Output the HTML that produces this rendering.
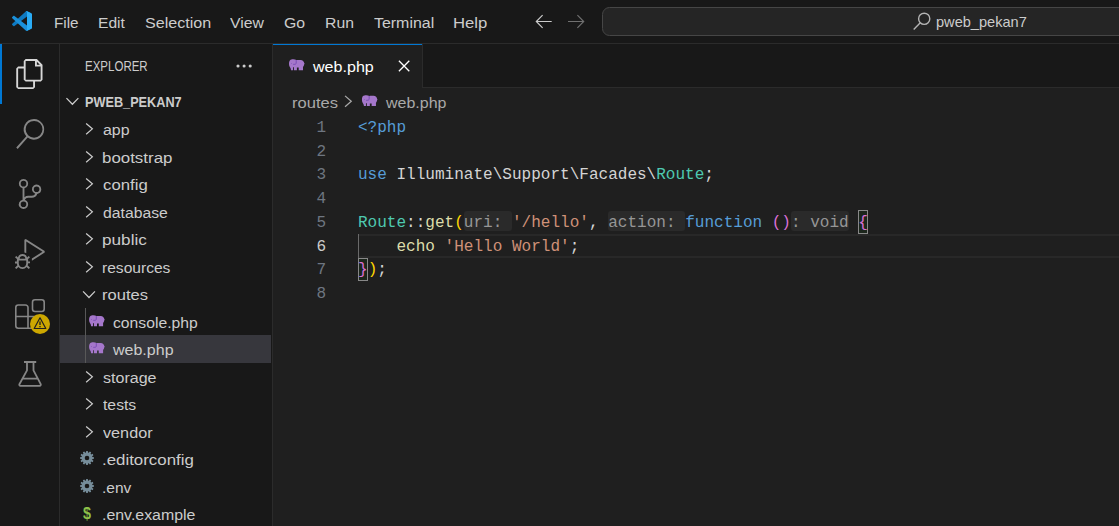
<!DOCTYPE html>
<html lang="en">
<head>
<meta charset="utf-8">
<title>web.php - pweb_pekan7 - Visual Studio Code</title>
<style>
*{box-sizing:border-box;margin:0;padding:0}
html,body{width:1119px;height:526px;overflow:hidden;background:#1f1f1f}
body{position:relative;font-family:"Liberation Sans",sans-serif;color:#cccccc}
.abs{position:absolute}
#titlebar{left:0;top:0;width:1119px;height:44px;background:#181818;border-bottom:1px solid #2b2b2b}
#activity{left:0;top:44px;width:60px;height:482px;background:#181818;border-right:1px solid #2b2b2b}
#sidebar{left:60px;top:44px;width:213px;height:482px;background:#181818;border-right:1px solid #2b2b2b}
#tabs{left:273px;top:44px;width:846px;height:44px;background:#181818;border-bottom:1px solid #2b2b2b}
#tab{left:273px;top:44px;width:149px;height:44px;background:#1f1f1f;border-top:1px solid #0078d4}
#tabr{left:422px;top:44px;width:1px;height:44px;background:#2b2b2b}
.t{white-space:nowrap;line-height:1;transform-origin:0 50%}
.code{font-family:"Liberation Mono",monospace;font-size:16.040px;white-space:pre;line-height:23.750px;height:23.750px;left:358px;color:#d4d4d4}
.ln{font-family:"Liberation Mono",monospace;font-size:16.040px;line-height:23.750px;height:23.750px;left:286px;width:40px;text-align:right}
.hint{color:#969696}
svg{display:block;overflow:visible}
</style>
</head>
<body>

<!-- TITLE BAR -->
<div id="titlebar" class="abs"></div>
<svg class="abs" style="left:12px;top:10.600px" width="20" height="20" viewBox="0 0 100 100">
  <path d="M96.461 10.796 75.857.876C73.472-.273 70.622.212 68.750 2.083L1.299 63.583c-1.815 1.654-1.813 4.511.004 6.162l5.510 5.009c1.485 1.350 3.722 1.450 5.321.237L93.361 13.370C96.086 11.303 100 13.246 100 16.667v-.240c0-2.401-1.375-4.590-3.539-5.631z" fill="#0e7ac2"/>
  <path d="M96.461 89.204 75.857 99.125c-2.385 1.148-5.235.663-7.107-1.208L1.299 36.417c-1.815-1.654-1.813-4.511.004-6.162l5.510-5.009c1.485-1.350 3.722-1.450 5.321-.237L93.361 86.630C96.086 88.697 100 86.754 100 83.333v.240c0 2.401-1.375 4.590-3.539 5.631z" fill="#1a90da"/>
  <path d="M75.858 99.126c-2.386 1.148-5.236.663-7.108-1.209C71.056 100.223 75 98.590 75 95.328V4.672c0-3.262-3.944-4.895-6.250-2.589C70.622.211 73.472-.274 75.858.874l20.601 9.907C98.623 11.822 100 14.011 100 16.413v67.174c0 2.402-1.377 4.592-3.541 5.633L75.858 99.126z" fill="#2aacf5"/>
</svg>

<!-- nav arrows -->



<!-- command center -->
<div class="abs" style="left:602px;top:7px;width:560px;height:29px;background:#252525;border:1px solid #464646;border-radius:7.500px"></div>
<svg class="abs" style="left:913px;top:12px" width="18" height="18" viewBox="0 0 18 18" fill="none" stroke="#b4b4b4" stroke-width="1.400"><circle cx="11.200" cy="6.800" r="5.600"/><path d="M7.300 10.700.7 17.500"/></svg>

<!-- ACTIVITY BAR -->
<div id="activity" class="abs"></div>
<div class="abs" style="left:0;top:44px;width:2px;height:60px;background:#0078d4"></div>
<svg class="abs" style="left:15px;top:59px" width="30" height="30" viewBox="0 0 24 24" fill="#d7d7d7"><path d="M17.500 0h-9L7 1.500V6H2.500L1 7.500v15.070L2.500 24h12.070L16 22.570V18h4.700l1.300-1.430V4.500L17.500 0zm0 2.120 2.380 2.380H17.500V2.120zm-3 20.380h-12v-15H7v9.070L8.500 18h6v4.500zm6-6h-12v-15H16V6h4.500v10.500z"/></svg>
<svg class="abs" style="left:15px;top:119px" width="30" height="30" viewBox="0 0 24 24" fill="#868686"><path d="M15.250 0a8.250 8.250 0 0 0-6.180 13.720L1 22.880l1.120 1.120 8.050-9.120A8.251 8.251 0 1 0 15.250.010V0zm0 15a6.750 6.750 0 1 1 0-13.500 6.750 6.750 0 0 1 0 13.500z"/></svg>
<svg class="abs" style="left:15px;top:179px" width="30" height="30" viewBox="0 0 24 24" fill="#868686"><path d="M21.007 8.222A3.738 3.738 0 0 0 15.045 5.200a3.737 3.737 0 0 0 1.156 6.583 2.988 2.988 0 0 1-2.668 1.670h-2.990a4.456 4.456 0 0 0-2.989 1.165V7.400a3.737 3.737 0 1 0-1.494 0v9.117a3.776 3.776 0 1 0 1.816.099 2.990 2.990 0 0 1 2.668-1.667h2.990a4.484 4.484 0 0 0 4.223-3.039 3.736 3.736 0 0 0 3.250-3.687zM4.565 3.738a2.242 2.242 0 1 1 4.484 0 2.242 2.242 0 0 1-4.484 0zm4.484 16.441a2.242 2.242 0 1 1-4.484 0 2.242 2.242 0 0 1 4.484 0zm8.221-9.715a2.242 2.242 0 1 1 0-4.485 2.242 2.242 0 0 1 0 4.485z"/></svg>
<svg class="abs" style="left:15px;top:239px" width="30" height="30" viewBox="0 0 24 24" fill="#868686"><path d="M10.940 13.500l-1.320 1.320a3.730 3.730 0 0 0-7.240 0L1.060 13.500 0 14.560l1.720 1.720-.22.220V18H0v1.500h1.500v.080c.077.489.214.966.410 1.420L0 22.940 1.060 24l1.650-1.650A4.308 4.308 0 0 0 6 24a4.310 4.310 0 0 0 3.290-1.650L10.940 24 12 22.940 10.090 21c.198-.464.336-.951.410-1.450v-.1H12V18h-1.500v-1.500l-.22-.22L12 14.560l-1.060-1.060zM6 13.500a2.250 2.250 0 0 1 2.250 2.250h-4.500A2.250 2.250 0 0 1 6 13.500zm3 6a3.330 3.330 0 0 1-3 3 3.330 3.330 0 0 1-3-3v-2.250h6v2.250zm14.760-9.900v1.260L13.500 17.370V15.600l8.500-5.370L9 2v9.460a5.070 5.070 0 0 0-1.500-.72V.630L8.640 0l15.120 9.600z"/></svg>
<svg class="abs" style="left:15px;top:299px" width="30" height="30" viewBox="0 0 30 30" fill="none" stroke="#868686" stroke-width="1.600"><rect x="17.500" y=".8" width="11.700" height="11.700" rx="2.500"/><path d="M13 17.500V8.500a2.500 2.500 0 0 0-2.500-2.500H3.300A2.500 2.500 0 0 0 .8 8.500v18.200a2.500 2.500 0 0 0 2.500 2.500h20a2.500 2.500 0 0 0 2.500-2.500V20a2.500 2.500 0 0 0-2.500-2.500H.8M13 17.500v11.700"/></svg>
<svg class="abs" style="left:30px;top:314px" width="20" height="20" viewBox="0 0 20 20"><circle cx="10" cy="10" r="10" fill="#cca700"/><path d="M10 3.800 15.800 14.500H4.200z" fill="none" stroke="#1f1f1f" stroke-width="1.200" stroke-linejoin="round"/><path d="M10 7.500v3.500M10 12v1.300" stroke="#1f1f1f" stroke-width="1.300"/></svg>
<svg class="abs" style="left:15px;top:359px" width="30" height="30" viewBox="0 0 30 30" fill="none" stroke="#868686" stroke-width="1.800" stroke-linejoin="round"><path d="M9 3h12.200M12 3v8.400L4.400 25.200a1.100 1.100 0 0 0 1 1.600h19.300a1.100 1.100 0 0 0 1-1.600L18.500 11.400V3M8 19.700h14.400"/></svg>

<!-- SIDEBAR -->
<div id="sidebar" class="abs"></div>
<svg class="abs" style="left:235px;top:64px" width="18" height="4" viewBox="0 0 18 4" fill="#cccccc"><circle cx="3" cy="2" r="1.550"/><circle cx="9.100" cy="2" r="1.550"/><circle cx="15.200" cy="2" r="1.550"/></svg>

<svg class="abs" style="left:84px;top:121px" width="11" height="15" viewBox="84 121 11 15"><path d="M86.15 123.45 92.35 128.85 86.15 134.25" fill="none" stroke="#cccccc" stroke-width="1.250"/></svg>
<svg class="abs" style="left:84px;top:149px" width="11" height="15" viewBox="84 149 11 15"><path d="M86.15 151.45 92.35 156.85 86.15 162.25" fill="none" stroke="#cccccc" stroke-width="1.250"/></svg>
<svg class="abs" style="left:84px;top:176px" width="11" height="15" viewBox="84 176 11 15"><path d="M86.15 178.45 92.35 183.85 86.15 189.25" fill="none" stroke="#cccccc" stroke-width="1.250"/></svg>
<svg class="abs" style="left:84px;top:204px" width="11" height="15" viewBox="84 204 11 15"><path d="M86.15 206.45 92.35 211.85 86.15 217.25" fill="none" stroke="#cccccc" stroke-width="1.250"/></svg>
<svg class="abs" style="left:84px;top:231px" width="11" height="15" viewBox="84 231 11 15"><path d="M86.15 233.45 92.35 238.85 86.15 244.25" fill="none" stroke="#cccccc" stroke-width="1.250"/></svg>
<svg class="abs" style="left:84px;top:259px" width="11" height="15" viewBox="84 259 11 15"><path d="M86.15 261.45 92.35 266.85 86.15 272.25" fill="none" stroke="#cccccc" stroke-width="1.250"/></svg>
<svg class="abs" style="left:81px;top:289px" width="16" height="11" viewBox="81 289 16 11"><path d="M83.05 291.40 89.00 297.50 94.95 291.40" fill="none" stroke="#cccccc" stroke-width="1.250"/></svg>
<svg class="abs" style="left:88px;top:314px" width="18" height="13" viewBox="88 314 18 13"><g transform="translate(89.10 315.25) scale(1.0000 1.0000)"><path d="M1 .9C1.800.2 3 0 4.200 0c1.400 0 2.400.3 3.100.8.600-.1 1.300-.15 2-.15h2.300c2.100.1 3.400 1.350 3.600 3.150l.4.400-.4.700c-.1 1.100-.6 2.100-1.200 2.700v3.300H9.700V8.300H7.900v2.600h-3V8H4v2.900H2C1.900 9.800 1.600 8.800 1 8 .4 7.200 0 6 0 4.500 0 3 .3 1.700 1 .9z" fill="#a577cb"/><path d="M7.200.8V4c-.1.800-.9 1.100-2 1.100h-1" fill="none" stroke="#6f42b0" stroke-width=".8"/><circle cx="2.400" cy="4.200" r=".42" fill="#6b44aa"/></g></svg>
<div class="abs" style="left:60px;top:335px;width:211px;height:28px;background:#37373d"></div>
<svg class="abs" style="left:88px;top:341px" width="18" height="13" viewBox="88 341 18 13"><g transform="translate(89.10 342.25) scale(1.0000 1.0000)"><path d="M1 .9C1.800.2 3 0 4.200 0c1.400 0 2.400.3 3.100.8.600-.1 1.300-.15 2-.15h2.300c2.100.1 3.400 1.350 3.600 3.150l.4.400-.4.700c-.1 1.100-.6 2.100-1.200 2.700v3.300H9.700V8.300H7.900v2.600h-3V8H4v2.900H2C1.900 9.800 1.600 8.800 1 8 .4 7.200 0 6 0 4.500 0 3 .3 1.700 1 .9z" fill="#a577cb"/><path d="M7.200.8V4c-.1.800-.9 1.100-2 1.100h-1" fill="none" stroke="#6f42b0" stroke-width=".8"/><circle cx="2.400" cy="4.200" r=".42" fill="#6b44aa"/></g></svg>
<svg class="abs" style="left:84px;top:369px" width="11" height="15" viewBox="84 369 11 15"><path d="M86.15 371.45 92.35 376.85 86.15 382.25" fill="none" stroke="#cccccc" stroke-width="1.250"/></svg>
<svg class="abs" style="left:84px;top:396px" width="11" height="15" viewBox="84 396 11 15"><path d="M86.15 398.45 92.35 403.85 86.15 409.25" fill="none" stroke="#cccccc" stroke-width="1.250"/></svg>
<svg class="abs" style="left:84px;top:424px" width="11" height="15" viewBox="84 424 11 15"><path d="M86.15 426.45 92.35 431.85 86.15 437.25" fill="none" stroke="#cccccc" stroke-width="1.250"/></svg>
<svg class="abs" style="left:78px;top:449px" width="17" height="17" viewBox="78 449 17 17"><g transform="translate(79.80 450.80) scale(0.9600)"><path fill-rule="evenodd" d="M6.43 1.90 6.66 0.25 8.34 0.25 8.57 1.90 9.37 2.12 10.40 0.80 11.85 1.64 11.22 3.19 11.81 3.78 13.36 3.15 14.20 4.60 12.88 5.63 13.10 6.43 14.75 6.66 14.75 8.34 13.10 8.57 12.88 9.37 14.20 10.40 13.36 11.85 11.81 11.22 11.22 11.81 11.85 13.36 10.40 14.20 9.37 12.88 8.57 13.10 8.34 14.75 6.66 14.75 6.43 13.10 5.63 12.88 4.60 14.20 3.15 13.36 3.78 11.81 3.19 11.22 1.64 11.85 0.80 10.40 2.12 9.37 1.90 8.57 0.25 8.34 0.25 6.66 1.90 6.43 2.12 5.63 0.80 4.60 1.64 3.15 3.19 3.78 3.78 3.19 3.15 1.64 4.60 0.80 5.63 2.12zM5.10 7.5a2.4 2.4 0 1 0 4.80 0a2.4 2.4 0 1 0 -4.80 0z" fill="#768d9a"/></g></svg>
<svg class="abs" style="left:78px;top:477px" width="17" height="17" viewBox="78 477 17 17"><g transform="translate(79.80 478.80) scale(0.9600)"><path fill-rule="evenodd" d="M6.43 1.90 6.66 0.25 8.34 0.25 8.57 1.90 9.37 2.12 10.40 0.80 11.85 1.64 11.22 3.19 11.81 3.78 13.36 3.15 14.20 4.60 12.88 5.63 13.10 6.43 14.75 6.66 14.75 8.34 13.10 8.57 12.88 9.37 14.20 10.40 13.36 11.85 11.81 11.22 11.22 11.81 11.85 13.36 10.40 14.20 9.37 12.88 8.57 13.10 8.34 14.75 6.66 14.75 6.43 13.10 5.63 12.88 4.60 14.20 3.15 13.36 3.78 11.81 3.19 11.22 1.64 11.85 0.80 10.40 2.12 9.37 1.90 8.57 0.25 8.34 0.25 6.66 1.90 6.43 2.12 5.63 0.80 4.60 1.64 3.15 3.19 3.78 3.78 3.19 3.15 1.64 4.60 0.80 5.63 2.12zM5.10 7.5a2.4 2.4 0 1 0 4.80 0a2.4 2.4 0 1 0 -4.80 0z" fill="#768d9a"/></g></svg>
<div class="abs t" style="left:83px;top:505.40px;font-size:16.500px;font-weight:bold;color:#8dc149;transform:scaleX(.87)">$</div>
<div class="abs" style="left:85px;top:308px;width:1px;height:55px;background:#585858"></div>

<!-- EDITOR -->
<div id="tabs" class="abs"></div>
<div id="tab" class="abs"></div>
<div id="tabr" class="abs"></div>
<svg class="abs" style="left:288px;top:58px" width="18" height="13" viewBox="288 58 18 13"><g transform="translate(289.00 59.25) scale(1.0000 1.0000)"><path d="M1 .9C1.800.2 3 0 4.200 0c1.400 0 2.400.3 3.100.8.600-.1 1.300-.15 2-.15h2.300c2.100.1 3.400 1.350 3.600 3.150l.4.400-.4.700c-.1 1.100-.6 2.100-1.200 2.700v3.300H9.700V8.300H7.900v2.600h-3V8H4v2.900H2C1.900 9.800 1.600 8.800 1 8 .4 7.200 0 6 0 4.500 0 3 .3 1.700 1 .9z" fill="#a577cb"/><path d="M7.200.8V4c-.1.800-.9 1.100-2 1.100h-1" fill="none" stroke="#6f42b0" stroke-width=".8"/><circle cx="2.400" cy="4.200" r=".42" fill="#6b44aa"/></g></svg>


<svg class="abs" style="left:360px;top:94px" width="18" height="13" viewBox="360 94 18 13"><g transform="translate(361.95 95.20) scale(1.0000 1.0000)"><path d="M1 .9C1.800.2 3 0 4.200 0c1.400 0 2.400.3 3.100.8.600-.1 1.300-.15 2-.15h2.300c2.100.1 3.400 1.350 3.600 3.150l.4.400-.4.700c-.1 1.100-.6 2.100-1.200 2.700v3.300H9.700V8.300H7.900v2.600h-3V8H4v2.900H2C1.900 9.800 1.600 8.800 1 8 .4 7.200 0 6 0 4.500 0 3 .3 1.700 1 .9z" fill="#a577cb"/><path d="M7.200.8V4c-.1.800-.9 1.100-2 1.100h-1" fill="none" stroke="#6f42b0" stroke-width=".8"/><circle cx="2.400" cy="4.200" r=".42" fill="#6b44aa"/></g></svg>
<svg class="abs" style="left:534px;top:13px" width="20" height="18" viewBox="534 13 20 18"><path d="M542.600 15.200 536.300 21.500 542.600 27.800M536.300 21.500H551.700" fill="none" stroke="#cccccc" stroke-width="1.150"/></svg>
<svg class="abs" style="left:566px;top:13px" width="20" height="18" viewBox="566 13 20 18"><path d="M577.400 15.200 583.700 21.500 577.400 27.800M583.700 21.500H568" fill="none" stroke="#707070" stroke-width="1.150"/></svg>
<svg class="abs" style="left:65px;top:96px" width="16" height="11" viewBox="65 96 16 11"><path d="M66.45 98.15 72.40 104.25 78.35 98.15" fill="none" stroke="#cccccc" stroke-width="1.250"/></svg>
<svg class="abs" style="left:343px;top:94px" width="11" height="15" viewBox="343 94 11 15"><path d="M345.05 95.90 351.25 101.30 345.05 106.70" fill="none" stroke="#a9a9a9" stroke-width="1.250"/></svg>
<svg class="abs" style="left:397px;top:59px" width="15" height="15" viewBox="397 59 15 15"><path d="M398.900 60.800 409.300 71.200M409.300 60.800 398.900 71.200" fill="none" stroke="#ffffff" stroke-width="1.300"/></svg>

<div class="abs" style="left:358px;top:234px;width:761px;height:24px;border-top:2px solid #282828;border-bottom:2px solid #282828"></div>
<div class="abs" style="left:358px;top:234.250px;width:1.300px;height:23.750px;background:#6a6a6a"></div>
<div class="abs" style="left:463.82px;top:211.00px;width:48.10px;height:20px;background:#2a2a2a;border-radius:3px"></div>
<div class="abs" style="left:608.12px;top:211.00px;width:76.96px;height:20px;background:#2a2a2a;border-radius:3px"></div>
<div class="abs" style="left:790.90px;top:211.00px;width:57.72px;height:20px;background:#2a2a2a;border-radius:3px"></div>
<div class="abs" style="left:858px;top:210px;width:10px;height:24px;background:#1c261c;border:1px solid #888888"></div>
<div class="abs" style="left:358px;top:258px;width:10px;height:23px;background:#1c261c;border:1px solid #888888"></div>
<div class="abs code" style="top:116.80px"><span style="color:#569cd6">&lt;?php</span></div>
<div class="abs code" style="top:164.30px"><span style="color:#569cd6">use</span> Illuminate\Support\Facades\<span style="color:#4ec9b0">Route</span>;</div>
<div class="abs code" style="top:211.80px"><span style="color:#4ec9b0">Route</span>::<span style="color:#dcdcaa">get</span><span style="color:#ffd700">(</span><span class="hint">uri: </span><span style="color:#ce9178">'/hello'</span>, <span class="hint">action: </span><span style="color:#569cd6">function</span> <span style="color:#da70d6">()</span><span class="hint">: void</span> <span style="color:#da70d6">{</span></div>
<div class="abs code" style="top:235.55px">    <span style="color:#dcdcaa">echo</span> <span style="color:#ce9178">'Hello World'</span>;</div>
<div class="abs code" style="top:259.30px"><span style="color:#da70d6">}</span><span style="color:#ffd700">)</span>;</div>
<div class="abs ln" style="top:116.80px;color:#6e7681">1</div>
<div class="abs ln" style="top:140.55px;color:#6e7681">2</div>
<div class="abs ln" style="top:164.30px;color:#6e7681">3</div>
<div class="abs ln" style="top:188.05px;color:#6e7681">4</div>
<div class="abs ln" style="top:211.80px;color:#6e7681">5</div>
<div class="abs ln" style="top:235.55px;color:#cccccc">6</div>
<div class="abs ln" style="top:259.30px;color:#6e7681">7</div>
<div class="abs ln" style="top:283.05px;color:#6e7681">8</div>

<div id="t_m_file" class="abs t" style="left:53.53px;top:15.01px;font-size:15.4px;color:#cccccc;font-weight:normal;transform:scaleX(0.9911)">File</div>
<div id="t_m_edit" class="abs t" style="left:97.60px;top:15.01px;font-size:15.4px;color:#cccccc;font-weight:normal;transform:scaleX(1.0132)">Edit</div>
<div id="t_m_sel" class="abs t" style="left:144.82px;top:15.01px;font-size:15.4px;color:#cccccc;font-weight:normal;transform:scaleX(1.0467)">Selection</div>
<div id="t_m_view" class="abs t" style="left:230.22px;top:15.01px;font-size:15.4px;color:#cccccc;font-weight:normal;transform:scaleX(1.0241)">View</div>
<div id="t_m_go" class="abs t" style="left:284.30px;top:15.01px;font-size:15.4px;color:#cccccc;font-weight:normal;transform:scaleX(1.0289)">Go</div>
<div id="t_m_run" class="abs t" style="left:325.38px;top:15.01px;font-size:15.4px;color:#cccccc;font-weight:normal;transform:scaleX(1.0244)">Run</div>
<div id="t_m_term" class="abs t" style="left:374.00px;top:15.01px;font-size:15.4px;color:#cccccc;font-weight:normal;transform:scaleX(1.0347)">Terminal</div>
<div id="t_m_help" class="abs t" style="left:453.32px;top:15.01px;font-size:15.4px;color:#cccccc;font-weight:normal;transform:scaleX(1.0858)">Help</div>
<div id="t_search" class="abs t" style="left:936.11px;top:14.69px;font-size:14.6px;color:#cccccc;font-weight:normal;transform:scaleX(0.9995)">pweb_pekan7</div>
<div id="t_explorer" class="abs t" style="left:85.10px;top:60.02px;font-size:13.8px;color:#cccccc;font-weight:normal;transform:scaleX(0.8342)">EXPLORER</div>
<div id="t_proj" class="abs t" style="left:85.08px;top:96.02px;font-size:13.8px;color:#cccccc;font-weight:bold;transform:scaleX(0.9202)">PWEB_PEKAN7</div>
<div id="t_r0" class="abs t" style="left:102.60px;top:122.01px;font-size:15.4px;color:#cccccc;font-weight:normal;transform:scaleX(1.0363)">app</div>
<div id="t_r1" class="abs t" style="left:101.85px;top:150.01px;font-size:15.4px;color:#cccccc;font-weight:normal;transform:scaleX(1.0973)">bootstrap</div>
<div id="t_r2" class="abs t" style="left:102.51px;top:177.01px;font-size:15.4px;color:#cccccc;font-weight:normal;transform:scaleX(1.0888)">config</div>
<div id="t_r3" class="abs t" style="left:102.63px;top:205.01px;font-size:15.4px;color:#cccccc;font-weight:normal;transform:scaleX(1.0235)">database</div>
<div id="t_r4" class="abs t" style="left:101.73px;top:232.01px;font-size:15.4px;color:#cccccc;font-weight:normal;transform:scaleX(1.1154)">public</div>
<div id="t_r5" class="abs t" style="left:102.05px;top:260.01px;font-size:15.4px;color:#cccccc;font-weight:normal;transform:scaleX(1.0123)">resources</div>
<div id="t_r6" class="abs t" style="left:101.81px;top:287.01px;font-size:15.4px;color:#cccccc;font-weight:normal;transform:scaleX(1.0746)">routes</div>
<div id="t_r7" class="abs t" style="left:112.91px;top:315.01px;font-size:15.4px;color:#cccccc;font-weight:normal;transform:scaleX(1.0207)">console.php</div>
<div id="t_r8" class="abs t" style="left:112.93px;top:342.01px;font-size:15.4px;color:#cccccc;font-weight:normal;transform:scaleX(1.0403)">web.php</div>
<div id="t_r9" class="abs t" style="left:102.61px;top:370.01px;font-size:15.4px;color:#cccccc;font-weight:normal;transform:scaleX(1.0425)">storage</div>
<div id="t_r10" class="abs t" style="left:102.76px;top:397.01px;font-size:15.4px;color:#cccccc;font-weight:normal;transform:scaleX(1.0226)">tests</div>
<div id="t_r11" class="abs t" style="left:102.76px;top:425.01px;font-size:15.4px;color:#cccccc;font-weight:normal;transform:scaleX(1.0530)">vendor</div>
<div id="t_r12" class="abs t" style="left:101.82px;top:452.01px;font-size:15.4px;color:#cccccc;font-weight:normal;transform:scaleX(1.0955)">.editorconfig</div>
<div id="t_r13" class="abs t" style="left:101.82px;top:480.01px;font-size:15.4px;color:#cccccc;font-weight:normal;transform:scaleX(1.0090)">.env</div>
<div id="t_r14" class="abs t" style="left:101.82px;top:507.01px;font-size:15.4px;color:#cccccc;font-weight:normal;transform:scaleX(1.0337)">.env.example</div>
<div id="t_tab" class="abs t" style="left:313.43px;top:59.01px;font-size:15.4px;color:#ffffff;font-weight:normal;transform:scaleX(1.0443)">web.php</div>
<div id="t_bc1" class="abs t" style="left:292.28px;top:95.01px;font-size:15.4px;color:#a9a9a9;font-weight:normal;transform:scaleX(1.0746)">routes</div>
<div id="t_bc2" class="abs t" style="left:385.84px;top:95.01px;font-size:15.4px;color:#a9a9a9;font-weight:normal;transform:scaleX(1.0402)">web.php</div>

</body>
</html>
